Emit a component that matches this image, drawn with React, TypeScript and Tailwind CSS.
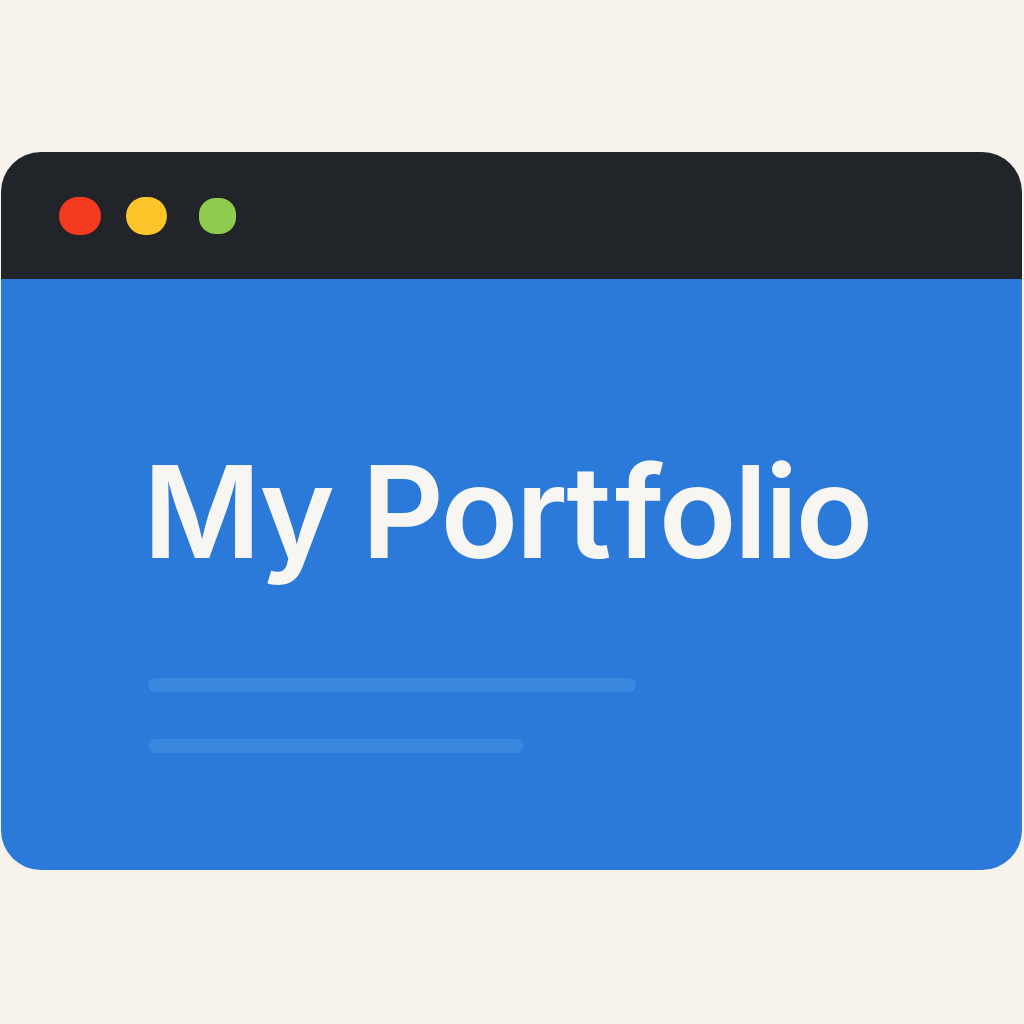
export default function App() {
  return (
    <div className="w-[1024px] h-[1024px] bg-[#f7f3ec] pt-[152px] overflow-hidden">
      <div className="ml-[1px] w-[1021px] h-[718px] rounded-[40px] overflow-hidden flex flex-col">
        <div className="h-[127px] bg-[#212428] flex items-center pl-[58px] gap-[26px] shrink-0">
          <div className="w-[42px] h-[38px] rounded-full bg-[#f53b1f]" />
          <div className="w-[41px] h-[38px] rounded-full bg-[#fcc62a] -ml-[1px]" />
          <div className="w-[37px] h-[36px] rounded-[45%] bg-[#8ecb4e] ml-[6px]" />
        </div>
        <div className="flex-1 bg-[#2b79d9] pt-[167px] pl-[142px]">
          <h1
            className="text-[128px] leading-[132px] font-semibold text-[#f8f6f2] tracking-[-2.7px] [font-variant-ligatures:none]"
            style={{ fontFamily: "Inter, 'Noto Sans', sans-serif" }}
          >
            My Por<span className="mr-[6px]">t</span>folio
          </h1>
          <div className="mt-[100px] ml-[5px] w-[488px] h-[14px] rounded-full bg-[#3a87df]" />
          <div className="mt-[47px] ml-[5px] w-[376px] h-[14px] rounded-full bg-[#3a87df]" />
        </div>
      </div>
    </div>
  );
}
